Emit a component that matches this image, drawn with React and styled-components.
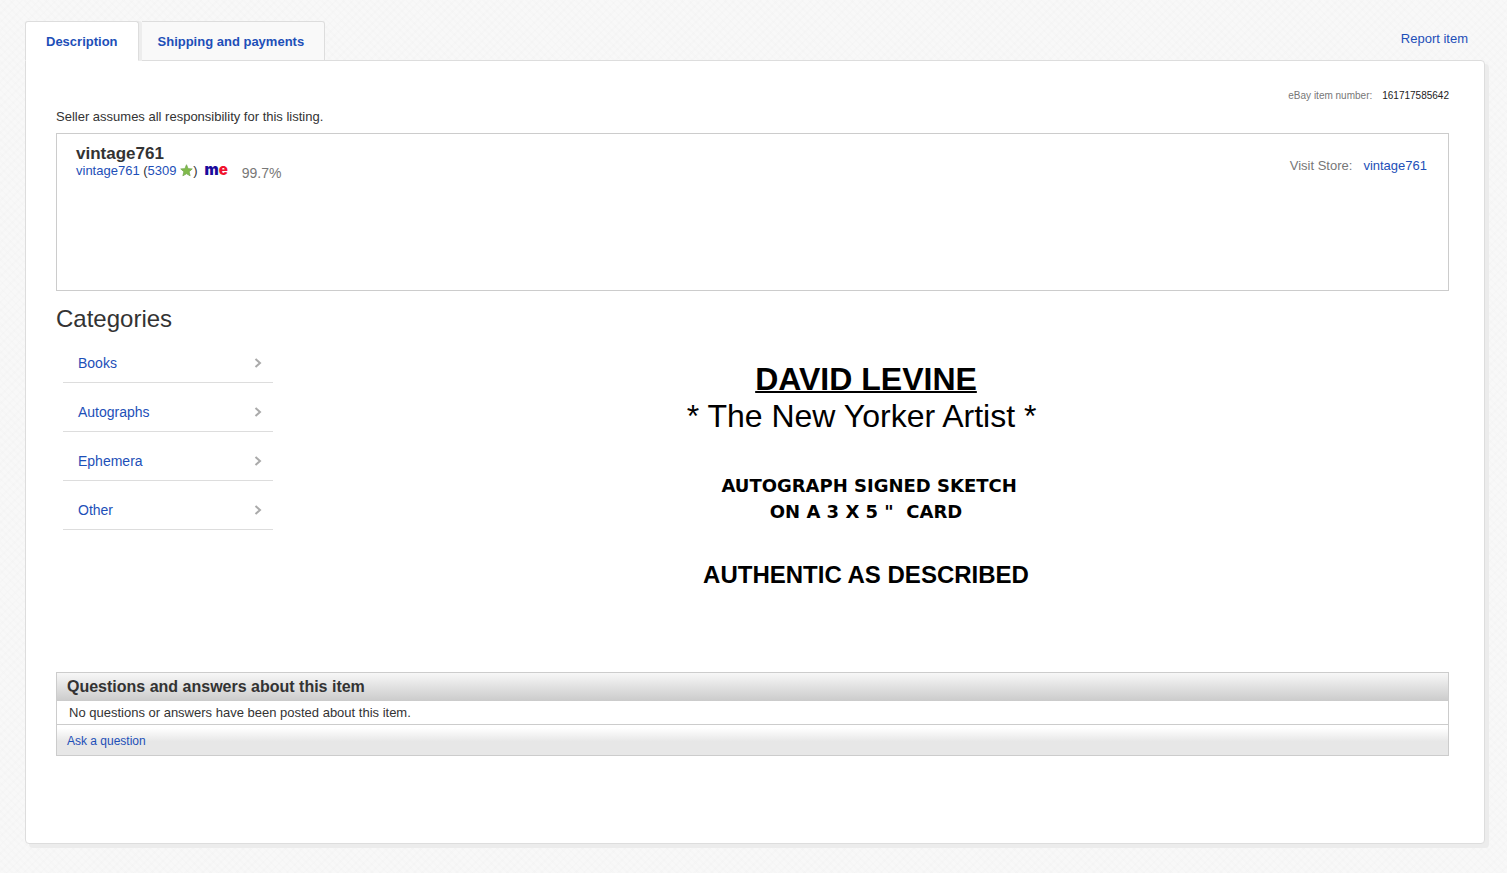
import React from "react"
import styled, { createGlobalStyle } from "styled-components"

const GlobalStyle = createGlobalStyle`
  * {
    box-sizing: border-box;
  }

  body {
    margin: 0;
    color: #333;
    font: 13px/16px "Liberation Sans", Arial, sans-serif;
    background-color: #f8f8f8;
    background-image:
      repeating-linear-gradient(45deg, transparent 0 3px, rgba(0, 0, 0, 0.008) 3px 5px),
      repeating-linear-gradient(-45deg, transparent 0 4px, rgba(0, 0, 0, 0.008) 4px 6px);
  }

  h1, h2, p, ul {
    margin: 0;
    padding: 0;
  }
`

const Page = styled.main`
  padding: 21px 22px 29px 25px;
`

const TopBar = styled.div`
  display: flex;
  justify-content: space-between;
  align-items: flex-start;
  margin-bottom: -1px;
`

const Tabs = styled.div`
  display: flex;
  gap: 3px;
  position: relative;
`

const Tab = styled.button`
  height: 40px;
  padding: 1px 20px 0;
  border: 1px solid #ddd;
  border-bottom-color: ${p => (p.$active ? "#fff" : "#ddd")};
  border-radius: 3px 3px 0 0;
  background: ${p => (p.$active ? "#fff" : "#f9f9f9")};
  box-shadow: ${p => (p.$active ? "3px 0 0 #ededed" : "none")};
  color: #1d4fb8;
  font: bold 13px/16px "Liberation Sans", Arial, sans-serif;
  cursor: pointer;

  & + & {
    padding: 1px 20px 0 16px;
    border-left: 0;
    border-radius: 0 3px 0 0;
  }
`

const A = styled.a`
  color: #1d4fb8;
  text-decoration: none;

  &:hover {
    text-decoration: underline;
  }
`

const Report = styled(A)`
  margin: 10px 17px 0 0;
`

const Panel = styled.section`
  padding: 28px 35px 87px 30px;
  border: 1px solid #ddd;
  border-radius: 0 4px 4px 4px;
  background: #fff;
  box-shadow: 4px 4px 0 #ececec;
`

const ItemNumber = styled.div`
  display: flex;
  justify-content: flex-end;
  gap: 10px;
  font-size: 10px;
  line-height: 14px;
  color: #777;

  b {
    color: #222;
    font-weight: normal;
  }
`

const Notice = styled.p`
  margin: 6px 0 8px;
`

const Seller = styled.div`
  display: flex;
  justify-content: space-between;
  min-height: 158px;
  padding: 11px 21px 0 19px;
  border: 1px solid #ccc;
`

const SellerName = styled.h1`
  font-size: 17px;
  line-height: 18px;
`

const SellerRow = styled.div`
  display: flex;
  align-items: flex-start;
`

const Feedback = styled.span`
  svg {
    vertical-align: -2px;
  }
`

const MeLink = styled.a`
  margin: 0 14px 0 7px;
  color: #1a0a9c;
  font: 900 15px/14px Inter, "Liberation Sans", sans-serif;
  text-decoration: none;

  span {
    color: #f0122d;
  }
`

const Percent = styled.span`
  padding-top: 2px;
  color: #777;
  font-size: 14px;
`

const VisitStore = styled.div`
  display: flex;
  gap: 11px;
  padding-top: 13px;
  color: #777;
`

const Columns = styled.div`
  display: grid;
  grid-template-columns: 227px 1fr;
`

const Categories = styled.nav`
  padding-top: 13px;

  h2 {
    font-size: 24px;
    font-weight: normal;
    line-height: 30px;
  }

  ul {
    width: 210px;
    margin-left: 7px;
    list-style: none;
  }
`

const Category = styled(A)`
  display: flex;
  align-items: center;
  justify-content: space-between;
  padding: 20px 11px 10px 15px;
  border-bottom: 1px solid #ddd;
  font-size: 14px;
  line-height: 18px;
`

const Listing = styled.article`
  padding-top: 70px;
  color: #000;
  text-align: center;
`

const Title = styled.p`
  font-size: 32px;
  font-weight: ${p => (p.$strong ? "bold" : "normal")};
  text-decoration: ${p => (p.$strong ? "underline 2px" : "none")};
  line-height: 37px;
`

const Subtitle = styled.p`
  margin: 38px 0 36px;
  font-family: "Arial Black", "DejaVu Sans", sans-serif;
  font-size: 18px;
  font-weight: 900;
  line-height: 26px;
`

const Claim = styled.p`
  font-size: 24px;
  font-weight: bold;
  line-height: 28px;
`

const Questions = styled.section`
  margin-top: 83px;
  border: 1px solid #ccc;

  h2 {
    padding: 4px 10px;
    background: linear-gradient(#f7f7f7, #cbcbcb);
    font-size: 16px;
    line-height: 20px;
  }

  p {
    padding: 4px 12px 3px;
    border-bottom: 1px solid #ccc;
  }
`

const Ask = styled.div`
  padding: 8px 10px 6px;
  background: linear-gradient(#fff 10%, #e7e7e7 55%);
  font-size: 12px;
`

const Star = () => (
  <svg width="13" height="13" viewBox="0 0 14 14" aria-label="star">
    <path
      d="M7 .8l1.700 4.200 4.500.3-3.400 3 1.100 4.400L7 10.400l-3.900 2.300 1.100-4.400-3.400-3 4.500-.3z"
      fill="#80bb4a"
      stroke="#7aab56"
      strokeWidth=".9"
      strokeLinejoin="round"
    />
  </svg>
)

const Chevron = () => (
  <svg width="8" height="10" viewBox="0 0 8 10">
    <path d="M1.500 1l4.500 4-4.500 4" fill="none" stroke="#aaa" strokeWidth="2" />
  </svg>
)

const categories = ["Books", "Autographs", "Ephemera", "Other"]

const SellerBox = () => (
  <Seller>
    <div>
      <SellerName>vintage761</SellerName>
      <SellerRow>
        <Feedback>
          <A href="#seller">vintage761</A> (<A href="#feedback">5309</A> <Star />)
        </Feedback>
        <MeLink href="#me">
          m<span>e</span>
        </MeLink>
        <Percent>99.7%</Percent>
      </SellerRow>
    </div>
    <VisitStore>
      <span>Visit Store:</span>
      <A href="#store">vintage761</A>
    </VisitStore>
  </Seller>
)

const App = () => (
  <Page>
    <GlobalStyle />
    <TopBar>
      <Tabs role="tablist">
        <Tab role="tab" aria-selected="true" $active>Description</Tab>
        <Tab role="tab" aria-selected="false">Shipping and payments</Tab>
      </Tabs>
      <Report href="#report">Report item</Report>
    </TopBar>
    <Panel>
      <ItemNumber>
        <span>eBay item number:</span>
        <b>161717585642</b>
      </ItemNumber>
      <Notice>Seller assumes all responsibility for this listing.</Notice>
      <SellerBox />
      <Columns>
        <Categories>
          <h2>Categories</h2>
          <ul>
            {categories.map(name => (
              <li key={name}>
                <Category href={`#${name}`}>
                  {name}
                  <Chevron />
                </Category>
              </li>
            ))}
          </ul>
        </Categories>
        <Listing>
          <Title $strong>DAVID LEVINE</Title>
          <Title>* The New Yorker Artist *&nbsp;</Title>
          <Subtitle>
            &nbsp;AUTOGRAPH SIGNED SKETCH
            <br />
            ON A 3 X 5 "&nbsp; CARD
          </Subtitle>
          <Claim>AUTHENTIC AS DESCRIBED</Claim>
        </Listing>
      </Columns>
      <Questions>
        <h2>Questions and answers about this item</h2>
        <p>No questions or answers have been posted about this item.</p>
        <Ask>
          <A href="#ask">Ask a question</A>
        </Ask>
      </Questions>
    </Panel>
  </Page>
)

export default App
